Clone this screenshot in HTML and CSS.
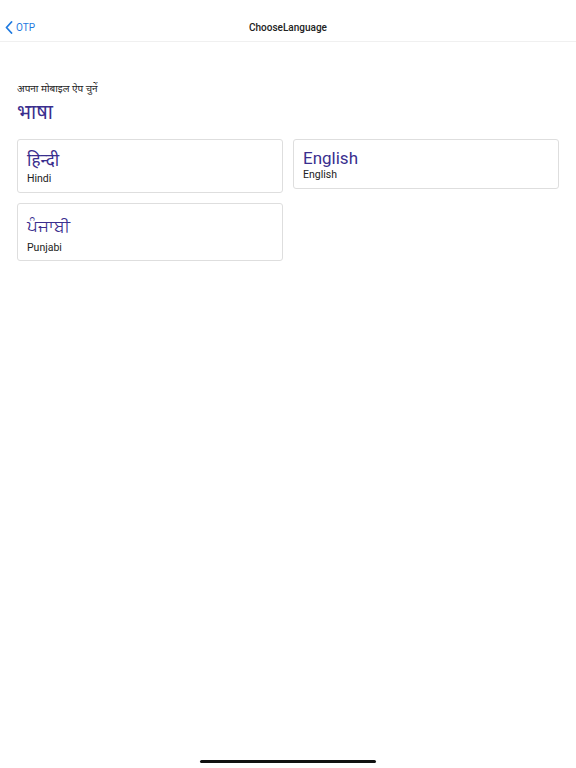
FILE: index.html
```html
<!DOCTYPE html>
<html lang="hi">
<head>
<meta charset="utf-8">
<link rel="stylesheet" href="styles.css">
</head>
<body>
<div class="screen">
  <header class="nav">
    <a class="back">
      <svg class="chev" width="8" height="13" viewBox="0 0 8 13"><path d="M6.5 1 L1.5 6.5 L6.5 12" fill="none" stroke="#1f7ae0" stroke-width="1.8" stroke-linecap="round" stroke-linejoin="round"/></svg>
      <span>OTP</span>
    </a>
    <div class="title">ChooseLanguage</div>
  </header>
  <main class="content">
    <div class="sub">अपना मोबाइल ऐप चुनें</div>
    <h1 class="heading">भाषा</h1>
    <div class="grid">
      <div class="card c-hi">
        <div class="lang">हिन्दी</div>
        <div class="name">Hindi</div>
      </div>
      <div class="card c-en">
        <div class="lang">English</div>
        <div class="name">English</div>
      </div>
      <div class="card c-pa">
        <div class="lang">ਪੰਜਾਬੀ</div>
        <div class="name">Punjabi</div>
      </div>
    </div>
  </main>
  <div class="home"></div>
</div>
</body>
</html>
```
FILE: styles.css
```css
* { box-sizing: border-box; }
html, body { margin: 0; padding: 0; background: #fff; }
body { font-family: Roboto, "Noto Sans", "Liberation Sans", sans-serif; color: #222; }
.screen { width: 576px; height: 768px; position: relative; overflow: hidden; }
.nav { height: 42px; border-bottom: 1px solid #f0f0f0; display: flex; align-items: center; justify-content: center; position: relative; }
.back { position: absolute; left: 5px; top: 21px; display: flex; align-items: center; gap: 3px; color: #1f7ae0; font-size: 10px; }
.back span { line-height: 13px; }
.title { font-size: 10px; font-weight: 500; color: #222; padding-top: 13px; }
.content { padding: 40px 17px 0 17px; }
.sub { font-size: 10px; color: #222; line-height: 14px; margin-top: 0; }
.heading { font-size: 20px; font-weight: 400; color: #3a2e8e; margin: 2px 0 13px 0; line-height: 28px; }
.grid { display: grid; grid-template-columns: 266px 266px; column-gap: 10px; row-gap: 10px; align-items: start; }
.card { border: 1px solid #dedede; border-radius: 3px; padding: 7px 9px; }
.lang { color: #3a2e8e; font-size: 17px; line-height: 24px; }
.name { font-size: 10.5px; color: #222; line-height: 14px; }
.c-hi { height: 54px; padding-top: 8px; }
.c-en { height: 50px; padding-top: 7px; }
.c-en .lang { line-height: 22px; }
.c-en .name { line-height: 12px; }
.c-pa { height: 58px; padding-top: 9px; }
.c-pa .lang { line-height: 26px; margin-bottom: 2px; }
.home { position: absolute; left: 200px; top: 760px; width: 176px; height: 3px; border-radius: 2px; background: #111; }
```
